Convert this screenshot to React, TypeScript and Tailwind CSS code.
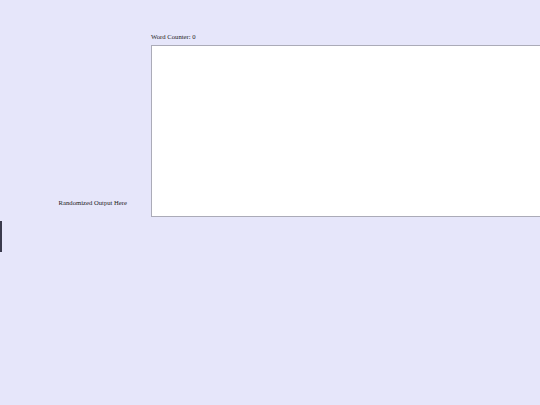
export default function App() {
    return (
        <div className="min-h-screen overflow-hidden bg-[#e6e6fa] pt-[32px] font-['Liberation_Serif',serif] text-[6.67px] text-[#1c1c24]">
            <div className="flex items-end">
                <span className="mb-[9px] w-[151px] shrink-0 pr-[24px] text-right">
                    Randomized Output Here
                </span>

                <div className="flex flex-col">
                    <label className="block">Word Counter: 0</label>
                    <textarea className="mt-[3px] h-[172px] w-[460px] shrink-0 resize-none border border-[#ababb8] bg-white outline-none" />
                </div>
            </div>

            <button className="mt-[4px] block h-[31px] w-[2px] bg-[#3a3a4c]" />
        </div>
    );
}
